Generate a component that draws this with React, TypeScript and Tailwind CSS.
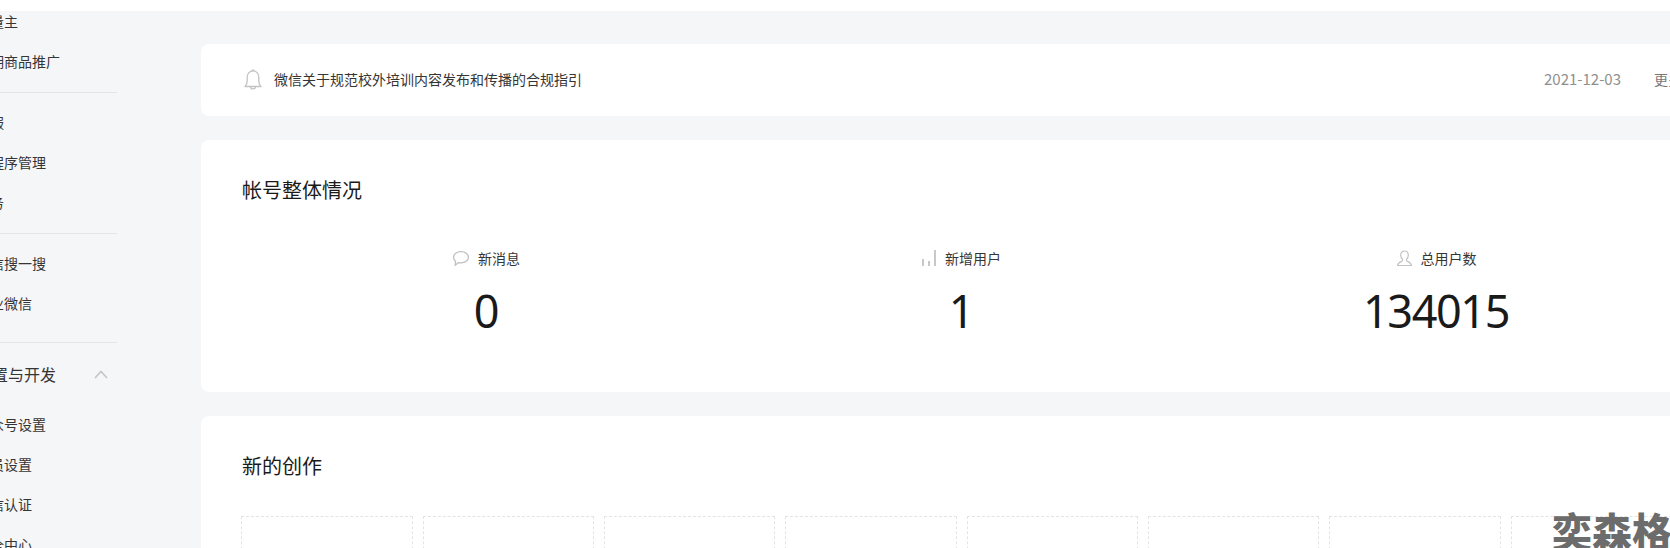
const cjk = "font-['Noto_Sans_CJK_SC','Microsoft_YaHei',sans-serif]";

function NavRow({ label, lift }: { label: string; lift?: boolean }) {
  return (
    <div className="h-10 flex items-center text-[14px] text-[#353535] whitespace-nowrap">
      <span className={lift ? "pb-[2px]" : ""}>{label}</span>
    </div>
  );
}

function Divider({ className }: { className: string }) {
  return <div className={`h-px bg-[#e4e5e8] ml-[24px] w-[117px] ${className}`} />;
}

function Bell() {
  return (
    <svg width="18" height="22" viewBox="0 0 18 22" fill="none" stroke="#c2c2c2" strokeWidth="1.3">
      <path d="M1 17.5c1.6-1.6 2.2-3 2.2-5.5V8a5.8 6.2 0 0 1 11.6 0v4c0 2.500.6 3.900 2.200 5.500z" strokeLinejoin="round" />
      <path d="M6.500 18c.2 2.600 4.800 2.600 5 0" />
      <path d="M7.800 1.800C8 .9 10 .9 10.200 1.800" />
    </svg>
  );
}

function Bubble() {
  return (
    <svg width="18" height="17" viewBox="0 0 17 16" fill="none" stroke="#bfbfbf" strokeWidth="1.2">
      <path d="M8.500 1.500c3.900 0 7 2.300 7 5.300s-3.100 5.300-7 5.300c-.9 0-1.700-.1-2.400-.3L3 14.500l.4-3.700C2.100 9.800 1.500 8.400 1.500 6.800c0-3 3.100-5.300 7-5.300z" strokeLinejoin="round" />
    </svg>
  );
}

function Bars() {
  return (
    <svg width="16" height="18" viewBox="0 0 16 18" fill="#c8c8c8">
      <rect x="1" y="10" width="2" height="7" />
      <rect x="7" y="12" width="2" height="5" />
      <rect x="13" y="1" width="2" height="16" />
    </svg>
  );
}

function UserIcon() {
  return (
    <svg width="17" height="17" viewBox="0 0 17 17" fill="none" stroke="#c2c2c2" strokeWidth="1.2">
      <path d="M8.500 1c2.300 0 3.800 1.800 3.800 4.200 0 1.900-.9 3.300-1.800 4.100v1.300c0 .7 4.700 1.500 5 4.900H1.500c.3-3.400 5-4.200 5-4.900V9.300C5.600 8.500 4.700 7.100 4.700 5.200 4.700 2.800 6.200 1 8.500 1z" strokeLinejoin="round" />
    </svg>
  );
}

function Stat({ icon, label, value }: { icon: React.ReactNode; label: string; value: string }) {
  return (
    <div className="w-[475px] flex flex-col items-center">
      <div className="flex items-center gap-[8px] h-6 text-[14px] text-[#353535]">
        {icon}
        <span>{label}</span>
      </div>
      <div className="mt-[11px] text-[45px] leading-[60px] tracking-[-1.4px] text-[#1a1a1a] font-['Noto_Sans','Open_Sans',sans-serif]">
        {value}
      </div>
    </div>
  );
}

export default function App() {
  const boxes = [0, 1, 2, 3, 4, 5, 6, 7];
  return (
    <div className={`relative w-[1670px] h-[548px] overflow-hidden bg-[#f5f6f8] flex flex-col ${cjk}`}>
      <div className="h-[11px] shrink-0 bg-white" />
      <div className="flex flex-1 min-h-0">
        <aside className="w-[201px] shrink-0 overflow-hidden">
          <div className="ml-[-24px] mt-[-9px] w-[225px]">
            <NavRow lift label="流量主" />
            <NavRow lift label="返佣商品推广" />
            <Divider className="my-[10px]" />
            <NavRow lift label="客服" />
            <NavRow lift label="小程序管理" />
            <NavRow lift label="服务" />
            <Divider className="my-[10px]" />
            <NavRow lift label="微信搜一搜" />
            <NavRow lift label="企业微信" />
            <Divider className="mt-[18px] mb-[7px]" />
            <div className="h-[48px] flex items-center justify-between pr-[93px] text-[16px] text-[#353535]">
              <span>设置与开发</span>
              <svg width="14" height="9" viewBox="0 0 14 9" fill="none" stroke="#c4c4c4" strokeWidth="1.600">
                <path d="M1 8l6-6.500L13 8" />
              </svg>
            </div>
            <div className="h-[6px]" />
            <NavRow label="公众号设置" />
            <NavRow label="人员设置" />
            <NavRow label="微信认证" />
            <NavRow label="安全中心" />
          </div>
        </aside>
        <main className="flex-1 min-w-0 overflow-hidden pt-[33px] flex flex-col gap-[24px]">
          <section className="w-[1500px] h-[72px] shrink-0 bg-white rounded-lg flex items-center pl-[43px] text-[14px]">
            <Bell />
            <span className="ml-[12px] mt-[-2px] text-[#353535]">微信关于规范校外培训内容发布和传播的合规指引</span>
            <span className="ml-[962px] mt-[-2px] text-[15px] text-[#8f8f8f]">2021-12-03</span>
            <span className="ml-[33px] mt-[-2px] text-[#777777] whitespace-nowrap">更多</span>
          </section>
          <section className="w-[1500px] h-[252px] shrink-0 bg-white rounded-lg pl-[41px] pt-[36px]">
            <h2 className="text-[20px] leading-[28px] text-[#1a1a1a]">帐号整体情况</h2>
            <div className="flex mt-[42px] ml-[6.5px]">
              <Stat icon={<Bubble />} label="新消息" value="0" />
              <Stat icon={<Bars />} label="新增用户" value="1" />
              <Stat icon={<UserIcon />} label="总用户数" value="134015" />
            </div>
          </section>
          <section className="w-[1500px] h-[300px] shrink-0 bg-white rounded-lg pl-[41px] pt-[36px]">
            <h2 className="text-[20px] leading-[28px] text-[#1a1a1a]">新的创作</h2>
            <div className="flex gap-[10px] mt-[36px] ml-[-0.6px]">
              {boxes.map((b) => (
                <div key={b} className="w-[171.33px] h-[120px] shrink-0 border border-dashed border-[#e3e4e6]" />
              ))}
            </div>
          </section>
        </main>
      </div>
      <div className="absolute left-[1552px] top-[505px] text-[40px] leading-[50px] font-black text-[#6c6c6c] whitespace-nowrap">奕森格</div>
    </div>
  );
}
